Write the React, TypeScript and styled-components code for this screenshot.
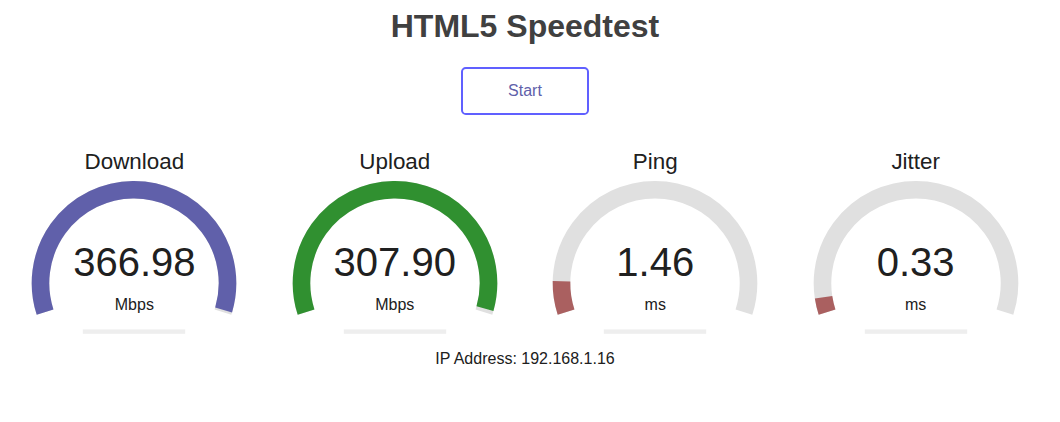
import React from "react";
import styled, { createGlobalStyle } from "styled-components";

const GlobalStyle = createGlobalStyle`
    html, body {
        margin: 0;
        padding: 0;
        background: #FFFFFF;
    }
    body {
        font-family: "Liberation Sans", Arial, sans-serif;
        color: #202020;
    }
`;

const METER_BK = "#E0E0E0";
const PROG_COLOR = "#EEEEEE";

// same curves the speedtest uses to map a value onto the dial
const mbpsToAmount = (s: number) => 1 - 1 / Math.pow(1.3, Math.sqrt(s));
const msToAmount = (s: number) => 1 - 1 / Math.pow(1.08, Math.sqrt(s));

const W = 256;
const H = 200;
const SCALE = H * 0.0055;
const LINE = 16 * SCALE;
const CX = W / 2;
const CY = H - 58 * SCALE;
const R = H / 1.8 - LINE;
const START = Math.PI * 0.9;
const SPAN = Math.PI * 1.2;

const arcPath = (from: number, to: number) => {
    const x0 = CX + R * Math.cos(from);
    const y0 = CY + R * Math.sin(from);
    const x1 = CX + R * Math.cos(to);
    const y1 = CY + R * Math.sin(to);
    const large = to - from > Math.PI ? 1 : 0;
    return `M ${x0} ${y0} A ${R} ${R} 0 ${large} 1 ${x1} ${y1}`;
};

const tests = [
    { name: "Download", value: "366.98", unit: "Mbps", amount: mbpsToAmount(366.98), color: "#6060AA" },
    { name: "Upload", value: "307.90", unit: "Mbps", amount: mbpsToAmount(307.9), color: "#309030" },
    { name: "Ping", value: "1.46", unit: "ms", amount: msToAmount(1.46), color: "#AA6060" },
    { name: "Jitter", value: "0.33", unit: "ms", amount: msToAmount(0.33), color: "#AA6060" },
];

type MeterProps = { amount: number; color: string };

const Meter = ({ amount, color }: MeterProps) => (
    <MeterSvg width={W} height={H} viewBox={`0 0 ${W} ${H}`}>
        <path d={arcPath(START, START + SPAN)} stroke={METER_BK} strokeWidth={LINE} fill="none" />
        <path d={arcPath(START, START + SPAN * amount)} stroke={color} strokeWidth={LINE} fill="none" />
        <rect x={W * 0.3} y={H - 16 * SCALE} width={W * 0.4} height={4 * SCALE} fill={PROG_COLOR} />
    </MeterSvg>
);

const App = () => {
    return (
        <>
            <GlobalStyle />
            <Page>
                <Title>HTML5 Speedtest</Title>
                <StartButton>Start</StartButton>
                <TestGroup>
                    {tests.map((t) => (
                        <TestArea key={t.name}>
                            <Meter amount={t.amount} color={t.color} />
                            <TestName>{t.name}</TestName>
                            <MeterText>{t.value}</MeterText>
                            <Unit>{t.unit}</Unit>
                        </TestArea>
                    ))}
                </TestGroup>
                <IpArea>IP Address: 192.168.1.16</IpArea>
            </Page>
        </>
    );
};

const Page = styled.div`
    width: 1050px;
    padding-top: 7.5px;
    display: flex;
    flex-direction: column;
    align-items: center;
    text-align: center;
`;

const Title = styled.h1`
    margin: 0;
    font-size: 32px;
    line-height: 37px;
    font-weight: 700;
    color: #404040;
`;

const StartButton = styled.div`
    margin-top: 22.5px;
    width: 128px;
    height: 48px;
    box-sizing: border-box;
    border: 2.4px solid #6060FF;
    border-radius: 4.8px;
    color: #6060AA;
    font-size: 16px;
    line-height: 43px;
    cursor: pointer;
`;

const TestGroup = styled.div`
    margin-top: 31.6px;
    display: flex;
    justify-content: center;
    gap: 4.45px;
`;

const TestArea = styled.div`
    position: relative;
    width: ${W}px;
    height: ${H}px;
`;

const MeterSvg = styled.svg`
    display: block;
`;

const TestName = styled.div`
    position: absolute;
    top: 2.24px;
    left: 0;
    width: 100%;
    font-size: 22.4px;
    line-height: 25.8px;
    color: #202020;
`;

const MeterText = styled.div`
    position: absolute;
    bottom: 62px;
    left: 0;
    width: 100%;
    font-size: 40px;
    line-height: 46px;
    color: #202020;
`;

const Unit = styled.div`
    position: absolute;
    bottom: 32px;
    left: 0;
    width: 100%;
    font-size: 16px;
    line-height: 18.4px;
    color: #202020;
`;

const IpArea = styled.div`
    margin-top: 3.7px;
    font-size: 16px;
    line-height: 18.4px;
    color: #202020;
`;

export default App;
